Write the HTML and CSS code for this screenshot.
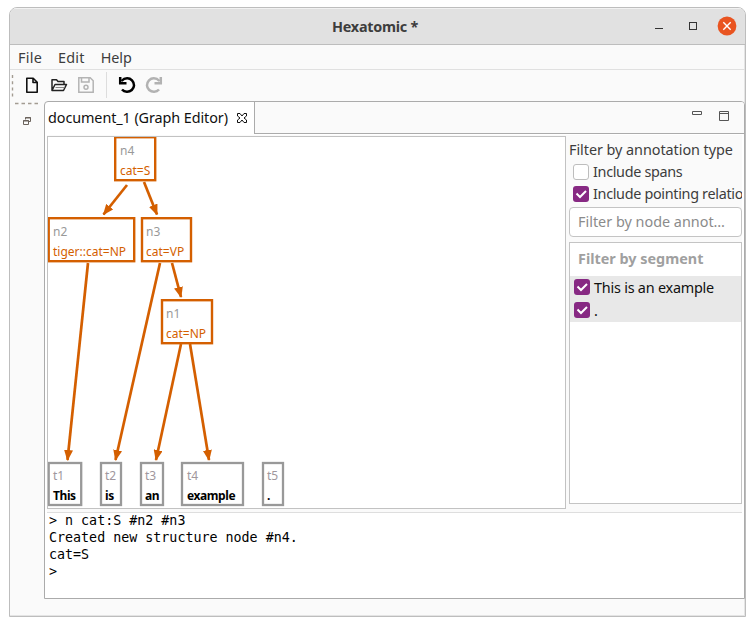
FILE: index.html
```html
<!DOCTYPE html>
<html lang="en">
<head>
<meta charset="utf-8">
<title>Hexatomic *</title>
<link rel="stylesheet" href="styles.css">
</head>
<body>
<div class="window">
  <header class="titlebar">
    <h1 class="title">Hexatomic *</h1>
    <svg class="window-controls" width="90" height="36" viewBox="650 8 90 36">
      <path d="M655 28.5h8" stroke="#333"/>
      <rect x="689.5" y="22.5" width="7" height="7" fill="none" stroke="#333"/>
      <circle cx="727" cy="26" r="9.4" fill="#e95420"/>
      <path d="M723.3 22.3l7.4 7.4M730.7 22.3l-7.4 7.4" stroke="#fff" stroke-width="1.4"/>
    </svg>
  </header>
  <nav class="menubar"><span>File</span><span>Edit</span><span class="help">Help</span></nav>
  <div class="toolbar">
    <svg width="160" height="31" viewBox="10 70 160 31" fill="none">
      <path d="M12.5 75v22" stroke="#a39c92" stroke-width="1.4" stroke-dasharray="3 3.2"/>
      <path d="M26.8 78.2h6.4l4 4v10h-10.4zM33 78v4.5h4.4" stroke="#111" stroke-width="1.6" stroke-linejoin="round"/>
      <path d="M52 90.5v-10.7h4.5l1.5 1.700h6v2.700M52 90.500l3-6h11.500l-3 6z" stroke="#222" stroke-width="1.5" stroke-linejoin="round"/>
      <path d="M55.5 87.5h9" stroke="#888"/>
      <path d="M78.8 77.8h11.400l3 3v11.400h-14.400zM81.500 78v4h7.500v-4" stroke="#b4b4b4" stroke-width="1.5"/>
      <circle cx="86" cy="87.2" r="2" stroke="#b4b4b4" stroke-width="1.5"/>
      <path d="M106.5 72v26" stroke="#ddd"/>
      <path d="M121.5 81c3.500-3.600 8-3.200 10.500-.7 3 3.200 2.500 7.200-.2 9.700-2.800 2.500-7.300 2.400-9.800-.5" stroke="#000" stroke-width="2.500"/>
      <path d="M120.200 77v6.300h6.300" stroke="#000" stroke-width="2.500"/>
      <path d="M159.500 81c-3.500-3.600-8-3.200-10.500-.7-3 3.200-2.500 7.200.2 9.700 2.800 2.500 7.300 2.400 9.800-.5" stroke="#b2b2b2" stroke-width="2.500"/>
      <path d="M160.800 77v6.300h-6.300" stroke="#b2b2b2" stroke-width="2.500"/>
    </svg>
  </div>
  <div class="workspace">
    <aside class="trim">
      <svg width="34" height="40" viewBox="10 100 34 40" fill="none">
        <path d="M15 103.500h25" stroke="#a39c92" stroke-width="1.300" stroke-dasharray="3.500 3"/>
        <path d="M25.500 119.500v-2h5v4h-2M25 118h6" stroke="#6b635c"/>
        <path d="M23.500 120.500h5v4h-5zM23 121h6" stroke="#6b635c"/>
      </svg>
    </aside>
    <main class="editor">
      <div class="tabs">
        <div class="tab"><span>document_1 (Graph Editor)</span>
          <svg width="12" height="12" viewBox="0 0 12 12"><path d="M1.500 1.500h2.500l2 2.500 2-2.500h2.500v2.500l-2.500 2 2.500 2v2.500h-2.500l-2-2.500-2 2.500h-2.500v-2.500l2.500-2-2.500-2z" fill="none" stroke="#111"/></svg>
        </div>
        <div class="tab-space">
          <svg width="40" height="20" viewBox="692 108 40 20" fill="none" stroke="#555"><path d="M692.500 111.500h9v3h-9zM719.500 111.500h9v9h-9zM719 113.500h10"/></svg>
        </div>
      </div>
      <div class="panes">
        <div class="canvas">
          <svg class="graph" width="517" height="371" viewBox="48 137 517 371">
            <defs><marker id="arrow" viewBox="0 0 11 9" refX="10" refY="4.500" markerWidth="11" markerHeight="9" markerUnits="userSpaceOnUse" orient="auto"><path d="M0 0l11 4.500-11 4.500z" fill="#d45f00"/></marker></defs>
            <g class="edges">
              <path d="M127 185L103.500 214.500"/><path d="M144 182L157 214.500"/>
              <path d="M88 263L67.500 460"/><path d="M160 263L115.500 460"/><path d="M172 263L181 297"/>
              <path d="M181 344L156 460"/><path d="M190 344L209 460"/>
            </g>
            <g class="nodes">
              <rect x="115.200" y="137.200" width="40" height="43"/><rect x="48.700" y="218.200" width="85.500" height="43"/><rect x="142" y="218.200" width="49" height="43"/><rect x="162" y="300.200" width="50" height="43"/>
            </g>
            <g class="tokens">
              <rect x="48.700" y="463" width="32.500" height="42"/><rect x="101" y="463" width="20" height="42"/><rect x="141" y="463" width="22" height="42"/><rect x="182" y="463" width="61" height="42"/><rect x="263" y="463" width="20" height="42"/>
            </g>
            <g class="names">
              <text x="120" y="155">n4</text><text x="53" y="236">n2</text><text x="146" y="236">n3</text><text x="166" y="318">n1</text>
            </g>
            <g class="names token-names">
              <text x="53" y="480">t1</text><text x="105" y="480">t2</text><text x="145" y="480">t3</text><text x="187" y="480">t4</text><text x="267" y="480">t5</text>
            </g>
            <g class="annotations">
              <text x="120" y="175">cat=S</text><text x="53" y="256">tiger::cat=NP</text><text x="146" y="256">cat=VP</text><text x="166" y="338">cat=NP</text>
            </g>
            <g class="words">
              <text x="53" y="500">This</text><text x="105" y="500">is</text><text x="145" y="500">an</text><text x="187" y="500">example</text><text x="267" y="500">.</text>
            </g>
          </svg>
        </div>
        <section class="filters">
          <div class="filter-title">Filter by annotation type</div>
          <div class="option"><i class="check"></i><span>Include spans</span></div>
          <div class="option"><i class="check on"><svg viewBox="0 0 16 16"><path d="M3.500 7.500l3.500 3.500 6-6"/></svg></i><span>Include pointing relations</span></div>
          <div class="search">Filter by node annot…</div>
          <div class="segments">
            <div class="segments-head">Filter by segment</div>
            <div class="row"><i class="check on"><svg viewBox="0 0 16 16"><path d="M3.500 7.500l3.500 3.500 6-6"/></svg></i><span>This is an example</span></div>
            <div class="row"><i class="check on"><svg viewBox="0 0 16 16"><path d="M3.500 7.500l3.500 3.500 6-6"/></svg></i><span>.</span></div>
          </div>
        </section>
      </div>
      <pre class="console">&gt; n cat:S #n2 #n3
Created new structure node #n4.
cat=S
&gt;</pre>
    </main>
  </div>
</div>
</body>
</html>
```
FILE: styles.css
```css
* { box-sizing: border-box; }
body {
  margin: 0;
  background: #fff;
  font: 14.4px/20px "Noto Sans", sans-serif;
  color: #3d3d3d;
  overflow: hidden;
}
svg { display: block; flex: none; }
.window {
  width: 737px;
  height: 610px;
  margin: 7px 0 0 9px;
  border: 1px solid #bdbdbd;
  border-radius: 8px 8px 0 0;
  background: #fafafa;
  box-shadow: inset -1px -1px #e4e4e4;
  overflow: hidden;
}
.titlebar {
  display: grid;
  grid-template-columns: 1fr auto 1fr;
  align-items: center;
  height: 37px;
  background: #e1e1e1;
  border-bottom: 1px solid #bdbdbd;
  box-shadow: inset 0 1px #f2f2f2;
}
.title {
  grid-column: 2;
  margin: 2px 0 0 -5px;
  font-size: 14.4px;
  letter-spacing: -.26px;
}
.window-controls { justify-self: end; margin-right: 5px; }
.menubar {
  display: flex;
  height: 25px;
  padding: 3px 8px 0;
  gap: 16px;
  border-bottom: 1px solid #e0e0e0;
  letter-spacing: .25px;
}
.help { letter-spacing: -.1px; }
.toolbar { height: 31px; }
.workspace { display: flex; height: 498px; }
.trim { width: 34px; margin-top: -1px; flex: none; }
.editor {
  width: 701px;
  border: 1px solid #ababab;
  border-radius: 4px 4px 0 0;
  background: #fff;
  overflow: hidden;
}
.tabs { display: flex; height: 32px; color: #111; }
.tab {
  display: flex;
  align-items: center;
  gap: 8px;
  width: 209px;
  padding-left: 3px;
  white-space: nowrap;
}
.tab span { width: 180px; letter-spacing: -.09px; }
.tab-space {
  display: flex;
  justify-content: flex-end;
  flex: 1;
  padding: 6px 12px 0 0;
  background: #fafafa;
  border-left: 1px solid #ababab;
  border-bottom: 1px solid #ababab;
}
.panes {
  display: flex;
  height: 378px;
  margin: 1px 2px 0;
  padding-top: 1px;
  gap: 3px;
  background: #fafafa;
  border-bottom: 1px solid #dedede;
  align-items: flex-start;
}
.canvas { height: 373px; border: 1px solid #c2c2c2; background: #fff; }
.edges path { stroke: #d45f00; stroke-width: 2.7; marker-end: url(#arrow); }
.nodes rect { fill: #fff; stroke: #d45f00; stroke-width: 2.4; }
.tokens rect { fill: #fff; stroke: #999; stroke-width: 2.3; }
.graph text { font-size: 12px; }
.names { fill: #999; }
.token-names { fill: #a0979d; }
.annotations { fill: #d45f00; }
.words { fill: #000; font-weight: 700; letter-spacing: -.42px; }
.filters { width: 173px; padding-top: 4px; }
.filter-title { height: 21px; white-space: nowrap; letter-spacing: -.05px; }
.option {
  display: flex;
  align-items: center;
  height: 22px;
  padding-left: 4px;
  gap: 4px;
  white-space: nowrap;
  overflow: hidden;
  letter-spacing: -.32px;
}
.check {
  flex: none;
  width: 16px;
  height: 16px;
  margin-bottom: 1px;
  border: 1px solid #bdbdbd;
  border-radius: 3px;
  background: #fff;
}
.check.on { border: 0; background: #872983; }
.check path { fill: none; stroke: #fff; stroke-width: 2; }
.search {
  height: 30px;
  margin-top: 2px;
  padding: 4px 8px;
  border: 1px solid #c4c4c4;
  border-radius: 4px;
  background: #fff;
  color: #8b8b8b;
  white-space: nowrap;
}
.segments {
  height: 262px;
  margin-top: 5px;
  border: 1px solid #c4c4c4;
  background: #fff;
}
.segments-head { height: 33px; padding: 6px 8px; font-weight: 700; color: #a0a0a0; }
.row {
  display: flex;
  align-items: center;
  height: 23px;
  padding-left: 4px;
  gap: 4px;
  background: #e8e8e8;
  color: #111;
  letter-spacing: -.22px;
}
.console {
  margin: -1px 0 0;
  padding: 0 0 0 4px;
  font: 13.333px/17px "DejaVu Sans Mono", monospace;
  color: #000;
}
```
